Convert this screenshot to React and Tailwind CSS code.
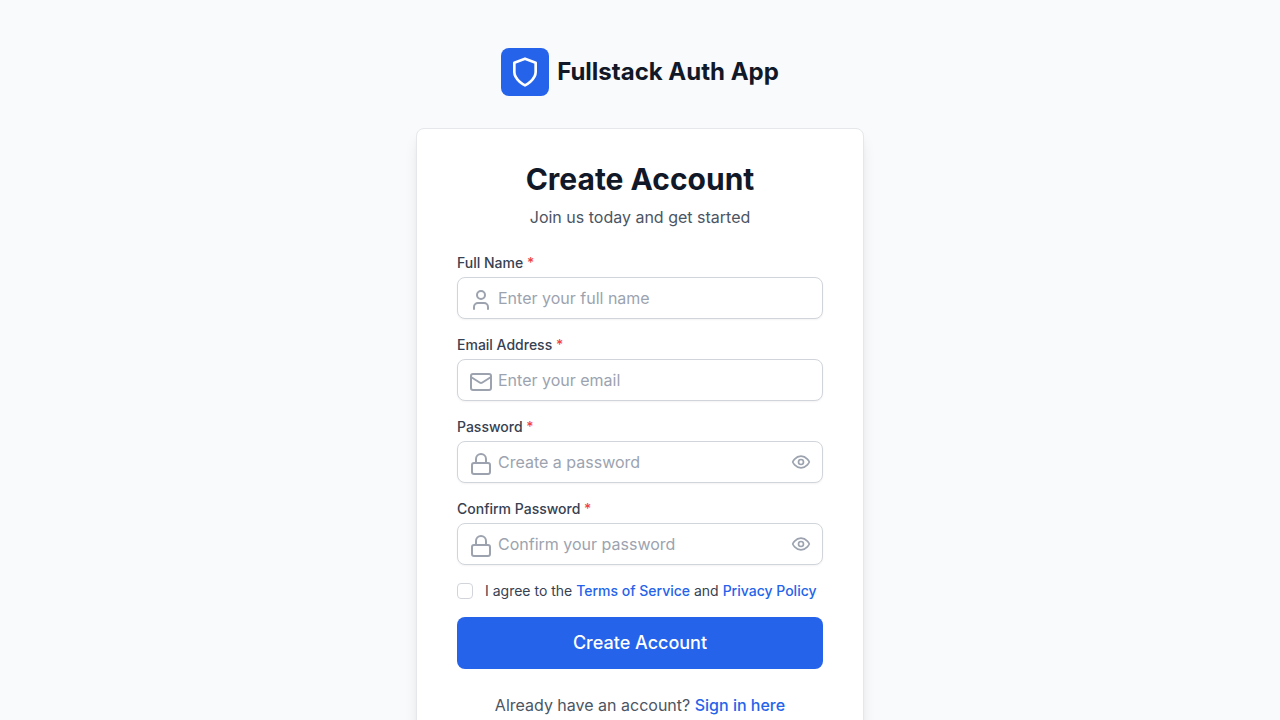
import { useState } from "react";
import { User, Mail, Lock, EyeOff } from "lucide-react";

function Shield({ className }) {
  return (
    <svg className={className} viewBox="0 0 24 24" fill="none" stroke="currentColor" strokeWidth="2" strokeLinecap="round" strokeLinejoin="round" aria-hidden="true">
      <path d="M12 22s8-4 8-10V5l-8-3-8 3v7c0 6 8 10 8 10Z" />
    </svg>
  );
}

function Eye({ className }) {
  return (
    <svg className={className} viewBox="0 0 24 24" fill="none" stroke="currentColor" strokeWidth="2" strokeLinecap="round" strokeLinejoin="round" aria-hidden="true">
      <path d="M2 12s3-7 10-7 10 7 10 7-3 7-10 7-10-7-10-7Z" />
      <circle cx="12" cy="12" r="3" />
    </svg>
  );
}

function Field({ id, label, type = "text", placeholder, icon: Icon }) {
  const [shown, setShown] = useState(false);
  const isPassword = type === "password";
  const Toggle = shown ? EyeOff : Eye;
  return (
    <div>
      <label htmlFor={id} className="mb-1 block text-sm font-medium text-[#374151]">
        {label} <span className="text-[#ef4444]">*</span>
      </label>
      <div className="relative">
        <span className="pointer-events-none absolute inset-y-0 left-0 flex items-center pt-1 pl-3 text-[#9ca3af]">
          <Icon className="size-6" />
        </span>
        <input
          id={id}
          type={isPassword && shown ? "text" : type}
          placeholder={placeholder}
          className="block w-full rounded-lg border border-[#d1d5db] bg-white py-2 pr-10 pl-10 text-base text-[#111827] shadow-xs placeholder:text-[#9ca3af] focus:border-[#2563eb] focus:outline-none"
        />
        {isPassword && (
          <button
            type="button"
            aria-label="Toggle password visibility"
            onClick={() => setShown(!shown)}
            className="absolute inset-y-0 right-0 flex items-center pr-3 text-[#9ca3af]"
          >
            <Toggle className="size-5" />
          </button>
        )}
      </div>
    </div>
  );
}

export default function App() {
  return (
    <div className="min-h-screen bg-[#f9fafb] py-12 font-[Inter,sans-serif]">
      <header className="flex items-center justify-center gap-2">
        <div className="flex size-12 items-center justify-center rounded-lg bg-[#2563eb] text-white">
          <Shield className="size-8" />
        </div>
        <span className="text-2xl font-bold text-[#111827]">Fullstack Auth App</span>
      </header>
      <main className="mx-auto mt-8 w-full max-w-md rounded-lg border border-[#e5e7eb] bg-white px-10 py-8 shadow-lg">
        <div className="mb-6 text-center">
          <h1 className="mb-2 text-3xl font-bold text-[#111827]">Create Account</h1>
          <p className="text-base text-[#4b5563]">Join us today and get started</p>
        </div>
        <form className="space-y-4" onSubmit={(e) => e.preventDefault()}>
          <Field id="name" label="Full Name" placeholder="Enter your full name" icon={User} />
          <Field id="email" label="Email Address" type="email" placeholder="Enter your email" icon={Mail} />
          <Field id="password" label="Password" type="password" placeholder="Create a password" icon={Lock} />
          <Field id="confirm" label="Confirm Password" type="password" placeholder="Confirm your password" icon={Lock} />
          <div className="flex items-center">
            <input id="terms" type="checkbox" className="size-4 appearance-none rounded border border-[#d1d5db] bg-white checked:bg-[#2563eb]" />
            <label htmlFor="terms" className="ml-3 text-sm text-[#374151]">
              I agree to the <a href="#terms" className="font-medium text-[#2563eb]">Terms of Service</a> and{" "}
              <a href="#privacy" className="font-medium text-[#2563eb]">Privacy Policy</a>
            </label>
          </div>
          <button type="submit" className="w-full rounded-lg bg-[#2563eb] px-6 py-3 text-lg font-medium text-white">
            Create Account
          </button>
        </form>
        <p className="mt-6 text-center text-base text-[#4b5563]">
          Already have an account? <a href="#signin" className="font-medium text-[#2563eb]">Sign in here</a>
        </p>
      </main>
    </div>
  );
}
